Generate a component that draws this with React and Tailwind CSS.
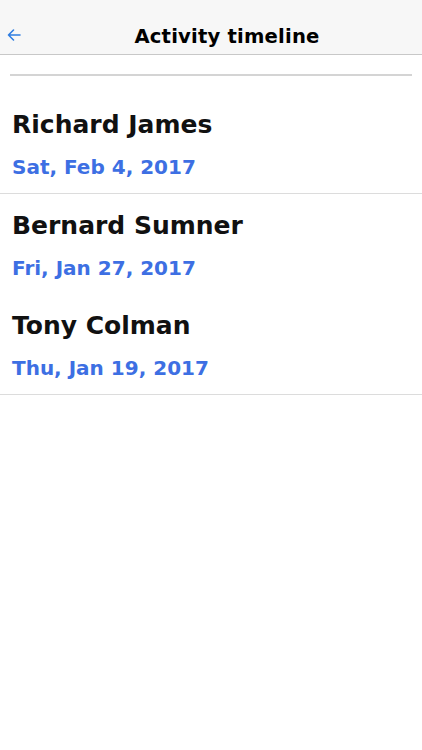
import React from "react";

const items = [
  { name: "Richard James", date: "Sat, Feb 4, 2017", border: true },
  { name: "Bernard Sumner", date: "Fri, Jan 27, 2017", border: false },
  { name: "Tony Colman", date: "Thu, Jan 19, 2017", border: true },
];

export default function App() {
  return (
    <div className="w-[422px] h-[750px] bg-white" style={{ fontFamily: '"DejaVu Sans", Verdana, sans-serif' }}>
      <div className="h-[55px] bg-[#f7f7f7] border-b border-[#c8c8c8] relative flex items-center justify-center">
        <svg className="absolute left-[7px] top-[28px]" width="14" height="14" viewBox="0 0 14 14" fill="none" stroke="#2f7de1" strokeWidth="1.6" strokeLinecap="round" strokeLinejoin="round">
          <path d="M13 7H1.5M6.5 2L1.5 7l5 5" />
        </svg>
        <span className="text-[19.6px] font-bold text-black mt-[20px] tracking-[0.2px] ml-[32px]">Activity timeline</span>
      </div>
      <div className="pt-[19px]">
        <div className="mx-[10px] h-[2px] bg-[#d4d4d4]" />
      </div>
      <div className="pt-[17px]">
        {items.map((it, i) => (
          <div key={i} className={`${it.border ? "border-b border-[#dcdcdc]" : ""}`}>
            <div className="px-[12px] pt-[17px] pb-[13px]">
              <div className="text-[25px] font-bold text-[#111] leading-[30px]">{it.name}</div>
              <div className="text-[20px] font-bold text-[#3d6fe3] leading-[26px] mt-[14px]">{it.date}</div>
            </div>
          </div>
        ))}
      </div>
    </div>
  );
}
